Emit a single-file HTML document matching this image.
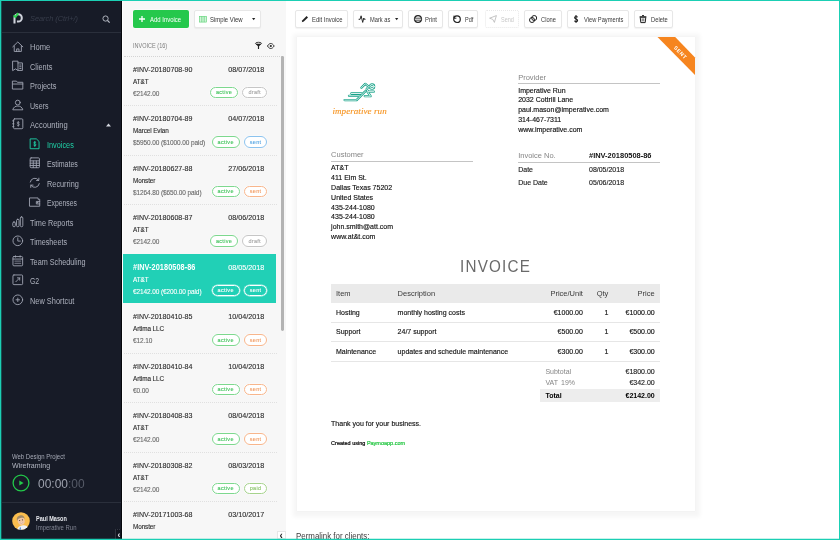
<!DOCTYPE html>
<html lang="en">
<head>
<meta charset="utf-8">
<title>Invoices</title>
<style>
*{box-sizing:border-box;margin:0;padding:0}
html,body{width:840px;height:540px;overflow:hidden;background:#fff}
body{font-family:"Liberation Sans",sans-serif;font-size:7px;color:#222;position:relative}
.t{position:absolute;white-space:nowrap}
.r{position:absolute}
svg{position:absolute;overflow:visible}
#app{position:absolute;left:0;top:0;width:840px;height:540px;will-change:transform}
#side{position:absolute;left:0;top:0;width:122px;height:540px;background:#171b27}
#list{position:absolute;left:122px;top:0;width:163.5px;height:540px;background:#f7f7f7;border-left:1.5px solid #fdfdfd}
#main{position:absolute;left:285.5px;top:0;width:554.5px;height:540px;background:#fff}
#paper{position:absolute;left:296.7px;top:37.3px;width:398px;height:474px;background:#fff;box-shadow:0 1.5px 4px 4.5px rgba(0,0,0,.04),0 0 1px rgba(0,0,0,.05)}
.btn{position:absolute;top:10px;height:17.6px;border:1px solid #e7e7e7;border-radius:2px;background:#fff;box-shadow:0 1px 1px rgba(0,0,0,.05)}
.bd{position:absolute;height:11.6px;border:1.2px solid;border-radius:6px;background:#fff;box-shadow:0 0 0 .5px rgba(255,255,255,.7)}
.bd span{position:absolute;left:0;right:0;top:.6px;text-align:center;font-size:5.5px;line-height:9.6px;letter-spacing:.3px;-webkit-text-stroke:.1px}
.sep{position:absolute;height:0;border-top:1px dotted #e0e0e0}
</style>
</head>
<body>
<div id="app">
<aside aria-label="Sidebar">
<div id="side"></div>
<svg style="left:12.7px;top:12.3px" width="10.3" height="12.2" viewBox="0 0 11 13"><path d="M1.6 12.2V6.3a3.9 3.9 0 1 1 3.9 3.9H4.2" fill="none" stroke="#cfd3dc" stroke-width="2.2"/><path d="M0.6 3.6L2.6 5.4L5.6 1.2" fill="none" stroke="#2bd04d" stroke-width="2"/></svg>
<div class="t" style="left:30px;top:14px;font-size:7.6px;line-height:10px;color:#383d4b;font-style:italic;transform:scaleX(0.967);transform-origin:0 50%">Search (Ctrl+/)</div>
<svg style="left:102.3px;top:14.8px" width="8.4" height="8.4" viewBox="0 0 9 9"><circle cx="3.8" cy="3.8" r="2.8" fill="none" stroke="#b8bcc6" stroke-width="1"/><path d="M5.9 5.9L8.2 8.2" stroke="#b8bcc6" stroke-width="1.2"/></svg>
<div class="r" style="left:1.5px;top:32px;width:120.5px;height:1px;background:#2a2f3b"></div>
<svg style="left:12.2px;top:40.5px" width="11.6" height="11.6" viewBox="0 0 12 12" fill="none" stroke="#9ea2b0" stroke-width=".95" stroke-linejoin="round" stroke-linecap="round"><path d="M0.8 6L6 1L11.2 6"/><path d="M2.3 5.2V10.8H9.7V5.2"/><path d="M4.8 10.8V8.2H7.2V10.8"/></svg>
<div class="t" style="left:29.6px;top:42.3px;font-size:8.3px;line-height:10px;color:#adb1bd;transform:scaleX(0.912);transform-origin:0 50%">Home</div>
<svg style="left:12.2px;top:59.9px" width="11.6" height="11.6" viewBox="0 0 12 12" fill="none" stroke="#9ea2b0" stroke-width=".95" stroke-linejoin="round" stroke-linecap="round"><path d="M1 1.2H6.2V10.8L3.6 9.2L1 10.8Z"/><path d="M6.2 3H10.8V10.8H6.2"/><path d="M8 5.2H9.3M8 7H9.3M8 8.8H9.3"/></svg>
<div class="t" style="left:29.6px;top:61.7px;font-size:8.3px;line-height:10px;color:#adb1bd;transform:scaleX(0.883);transform-origin:0 50%">Clients</div>
<svg style="left:12.2px;top:79.4px" width="11.6" height="11.6" viewBox="0 0 12 12" fill="none" stroke="#9ea2b0" stroke-width=".95" stroke-linejoin="round" stroke-linecap="round"><path d="M0.8 2.2H4.6L5.6 3.4H11.2V10.4H0.8Z"/><path d="M0.8 5.2H11.2"/></svg>
<div class="t" style="left:29.6px;top:81.2px;font-size:8.3px;line-height:10px;color:#adb1bd;transform:scaleX(0.884);transform-origin:0 50%">Projects</div>
<svg style="left:12.2px;top:98.8px" width="11.6" height="11.6" viewBox="0 0 12 12" fill="none" stroke="#9ea2b0" stroke-width=".95" stroke-linejoin="round" stroke-linecap="round"><circle cx="6" cy="3.7" r="2.5"/><path d="M0.9 10.8C1.6 8.3 3.6 7.3 6 7.3S10.4 8.3 11.1 10.8Z"/></svg>
<div class="t" style="left:29.6px;top:100.6px;font-size:8.3px;line-height:10px;color:#adb1bd;transform:scaleX(0.854);transform-origin:0 50%">Users</div>
<svg style="left:12.2px;top:118.2px" width="11.6" height="11.6" viewBox="0 0 12 12" fill="none" stroke="#9ea2b0" stroke-width=".95" stroke-linejoin="round" stroke-linecap="round"><rect x="1.6" y="0.9" width="9.6" height="10.2" rx="1"/><path d="M0.6 3H2M0.6 6H2M0.6 9H2"/><path d="M7.6 4.6C7.2 4 5.3 4 5.3 5.1S7.7 6 7.7 7S5.6 8.1 5.2 7.4M6.5 3.6V8.6" stroke-width=".8"/></svg>
<div class="t" style="left:29.6px;top:120px;font-size:8.3px;line-height:10px;color:#adb1bd;transform:scaleX(0.918);transform-origin:0 50%">Accounting</div>
<svg style="left:29.1px;top:137.8px" width="11.6" height="11.6" viewBox="0 0 12 12" fill="none" stroke="#1fd0a6" stroke-width=".95" stroke-linejoin="round" stroke-linecap="round"><path d="M1.6 0.9H7.6L10.4 3.6V11.1H1.6Z"/><path d="M7.1 4.6C6.7 4 4.9 4 4.9 5.1S7.2 6 7.2 7.1S5.2 8.2 4.8 7.5M6 3.6V8.8" stroke-width=".9"/></svg>
<div class="t" style="left:47.2px;top:139.6px;font-size:8.3px;line-height:10px;color:#1fd0a6;transform:scaleX(0.88);transform-origin:0 50%">Invoices</div>
<svg style="left:29.1px;top:157.3px" width="11.6" height="11.6" viewBox="0 0 12 12" fill="none" stroke="#9ea2b0" stroke-width=".95" stroke-linejoin="round" stroke-linecap="round"><rect x="1.2" y="0.9" width="9.6" height="10.2" rx="1"/><path d="M1.2 4H10.8M1.2 6.4H10.8M1.2 8.8H10.8M4.4 4V11M7.6 4V11"/></svg>
<div class="t" style="left:47.2px;top:159.1px;font-size:8.3px;line-height:10px;color:#adb1bd;transform:scaleX(0.848);transform-origin:0 50%">Estimates</div>
<svg style="left:29.1px;top:176.8px" width="11.6" height="11.6" viewBox="0 0 12 12" fill="none" stroke="#9ea2b0" stroke-width=".95" stroke-linejoin="round" stroke-linecap="round"><path d="M1.3 5.2A4.8 4.8 0 0 1 10 3.4"/><path d="M10.7 6.8A4.8 4.8 0 0 1 2 8.6"/><path d="M10.2 1.2V3.6H7.8M1.8 10.8V8.4H4.2"/></svg>
<div class="t" style="left:47.2px;top:178.6px;font-size:8.3px;line-height:10px;color:#adb1bd;transform:scaleX(0.884);transform-origin:0 50%">Recurring</div>
<svg style="left:29.1px;top:196.3px" width="11.6" height="11.6" viewBox="0 0 12 12" fill="none" stroke="#9ea2b0" stroke-width=".95" stroke-linejoin="round" stroke-linecap="round"><path d="M0.9 2H9.4V3.4H11.1V10.6H0.9Z"/><path d="M11.1 5.6H7.6V8.2H11.1"/><circle cx="8.7" cy="6.9" r=".4"/></svg>
<div class="t" style="left:47.2px;top:198.1px;font-size:8.3px;line-height:10px;color:#adb1bd;transform:scaleX(0.823);transform-origin:0 50%">Expenses</div>
<svg style="left:12.2px;top:215.7px" width="11.6" height="11.6" viewBox="0 0 12 12" fill="none" stroke="#9ea2b0" stroke-width=".95" stroke-linejoin="round" stroke-linecap="round"><rect x="0.8" y="6.2" width="2.6" height="4.9" rx="1.2"/><rect x="4.7" y="3.4" width="2.6" height="7.7" rx="1.2"/><rect x="8.6" y="0.9" width="2.6" height="10.2" rx="1.2"/></svg>
<div class="t" style="left:29.6px;top:217.5px;font-size:8.3px;line-height:10px;color:#adb1bd;transform:scaleX(0.879);transform-origin:0 50%">Time Reports</div>
<svg style="left:12.2px;top:235.2px" width="11.6" height="11.6" viewBox="0 0 12 12" fill="none" stroke="#9ea2b0" stroke-width=".95" stroke-linejoin="round" stroke-linecap="round"><circle cx="6" cy="6" r="5"/><path d="M6 3V6.3H8.6"/></svg>
<div class="t" style="left:29.6px;top:237px;font-size:8.3px;line-height:10px;color:#adb1bd;transform:scaleX(0.869);transform-origin:0 50%">Timesheets</div>
<svg style="left:12.2px;top:254.7px" width="11.6" height="11.6" viewBox="0 0 12 12" fill="none" stroke="#9ea2b0" stroke-width=".95" stroke-linejoin="round" stroke-linecap="round"><rect x="1" y="1.6" width="10" height="9.6" rx="1"/><path d="M1 4.2H11M3.6 0.8V2.2M8.4 0.8V2.2"/><path d="M3 6.3H9M3 8.6H9" stroke-width="1.2" stroke-opacity=".6"/></svg>
<div class="t" style="left:29.6px;top:256.5px;font-size:8.3px;line-height:10px;color:#adb1bd;transform:scaleX(0.873);transform-origin:0 50%">Team Scheduling</div>
<svg style="left:12.2px;top:274.2px" width="11.6" height="11.6" viewBox="0 0 12 12" fill="none" stroke="#9ea2b0" stroke-width=".95" stroke-linejoin="round" stroke-linecap="round"><rect x="1" y="1" width="10" height="10" rx="1"/><path d="M4 8L8 4M5.6 4H8V6.4"/></svg>
<div class="t" style="left:29.6px;top:276px;font-size:8.3px;line-height:10px;color:#adb1bd;transform:scaleX(0.831);transform-origin:0 50%">G2</div>
<svg style="left:12.2px;top:293.7px" width="11.6" height="11.6" viewBox="0 0 12 12" fill="none" stroke="#9ea2b0" stroke-width=".95" stroke-linejoin="round" stroke-linecap="round"><circle cx="6" cy="6" r="5"/><path d="M6 4.2V7.8M4.2 6H7.8"/></svg>
<div class="t" style="left:29.6px;top:295.5px;font-size:8.3px;line-height:10px;color:#adb1bd;transform:scaleX(0.891);transform-origin:0 50%">New Shortcut</div>
<svg style="left:105.5px;top:122.5px" width="5" height="4" viewBox="0 0 5 4"><path d="M0 3.6L2.5 0.4L5 3.6Z" fill="#d5d8e0"/></svg>
<div class="t" style="left:12px;top:452px;font-size:6.5px;line-height:10px;color:#a6aab6;transform:scaleX(0.921);transform-origin:0 50%">Web Design Project</div>
<div class="t" style="left:12px;top:460.8px;font-size:7.1px;line-height:10px;color:#b0b4c0;transform:scaleX(0.998);transform-origin:0 50%">Wireframing</div>
<svg style="left:11.5px;top:474.3px" width="18" height="18" viewBox="0 0 18 18"><circle cx="9" cy="9" r="7.9" fill="none" stroke="#22c94a" stroke-width="1.3"/><path d="M7.3 6.6L11.6 9L7.3 11.4Z" fill="#22c94a"/></svg>
<div class="t" style="left:38.2px;top:475.8px;font-size:13.2px;line-height:16px;color:#9ea2ae;transform:scaleX(0.907);transform-origin:0 50%">00:00<span style="color:#565b68">:00</span></div>
<div class="r" style="left:1.5px;top:502px;width:120.5px;height:1px;background:#2a2f3b"></div>
<svg style="left:11.7px;top:512.1px" width="18" height="18" viewBox="0 0 18 18"><defs><clipPath id="av"><circle cx="9" cy="9" r="8.8"/></clipPath></defs><g clip-path="url(#av)"><rect width="18" height="18" fill="#fabd4e"/><path d="M5.2 18C5.6 15 8 13.4 11 13.2C13.6 13 15.6 14.2 16.6 16L15 18Z" fill="#eef2f8"/><path d="M8.2 14.6L9.4 18H7.2Z" fill="#4f7fc0"/><g transform="rotate(-14 9 8.4)"><ellipse cx="9.1" cy="8.6" rx="3.5" ry="4.3" fill="#f0c6a4"/><path d="M5.3 8.2C4.7 4.8 6.7 3.3 9.2 3.3S13.5 4.9 12.9 8.2C12.4 6.6 11.4 6 9.1 6S5.8 6.6 5.3 8.2Z" fill="#a08a68"/><circle cx="7.7" cy="8.2" r=".55" fill="#4a3a2c"/><circle cx="10.5" cy="8.2" r=".55" fill="#4a3a2c"/><path d="M7.8 10.6Q9.1 11.6 10.4 10.6" fill="#fff" stroke="#b5705c" stroke-width=".3"/></g></g></svg>
<div class="t" style="left:35.5px;top:513.7px;font-size:6.6px;line-height:10px;color:#e6e8ed;font-weight:bold;transform:scaleX(0.84);transform-origin:0 50%">Paul Mason</div>
<div class="t" style="left:35.5px;top:522.6px;font-size:6.6px;line-height:10px;color:#818593;transform:scaleX(0.905);transform-origin:0 50%">Imperative Run</div>
<div class="r" style="left:114.6px;top:529.4px;width:7.4px;height:9.6px;background:#121520;border-left:1px solid #30343f;border-top:1px dotted #343844"></div>
<div class="t" style="left:117.4px;top:530.4px;font-size:8.6px;line-height:10px;color:#e8eaee;font-weight:bold">&lsaquo;</div>
<div class="r" style="left:121px;top:0;width:1px;height:540px;background:#05070b"></div>
</aside>
<section aria-label="Invoice list">
<div id="list"></div>
<div class="r" style="left:132.6px;top:10px;width:56.3px;height:17.5px;background:#25c84c;border-radius:2px;box-shadow:0 0 0 .6px rgba(255,255,255,.8)"></div>
<svg style="left:138.6px;top:15.8px" width="6" height="6" viewBox="0 0 6 6"><path d="M3 0V6M0 3H6" stroke="#fff" stroke-width="1.3"/></svg>
<div class="t" style="left:150.4px;top:14.9px;font-size:7.4px;line-height:10px;color:#fff;transform:scaleX(0.807);transform-origin:0 50%">Add Invoice</div>
<div class="btn" style="left:194.2px;width:66.5px"></div>
<svg style="left:199px;top:15.7px" width="8" height="6.4" viewBox="0 0 8 6.4"><rect x="0.3" y="0.3" width="7.4" height="5.8" fill="#d2f3d8" stroke="#5ad474" stroke-width=".6"/><path d="M2.8 0.3V6.1M5.2 0.3V6.1" stroke="#5ad474" stroke-width=".7"/></svg>
<div class="t" style="left:210.2px;top:14.9px;font-size:7.4px;line-height:10px;color:#333;transform:scaleX(0.803);transform-origin:0 50%">Simple View</div>
<svg style="left:251.6px;top:18px" width="3.3" height="2.4" viewBox="0 0 4 3"><path d="M0 0H4L2 2.8Z" fill="#222"/></svg>
<div class="t" style="left:132.7px;top:41.1px;font-size:6.6px;line-height:10px;color:#7e7e7e;transform:scaleX(0.84);transform-origin:0 50%">INVOICE (16)</div>
<svg style="left:254.8px;top:42.2px" width="7" height="7.2" viewBox="0 0 7.4 7.6"><ellipse cx="3.7" cy="1.5" rx="3.2" ry="1.2" fill="none" stroke="#222" stroke-width=".9"/><path d="M0.6 1.8L3.1 4.6V7.4H4.3V4.6L6.8 1.8Z" fill="#222"/></svg>
<svg style="left:267.4px;top:43px" width="7.6" height="6" viewBox="0 0 7.6 6"><path d="M0.4 3C1.6 1.2 2.7 0.5 3.8 0.5S6 1.2 7.2 3C6 4.8 4.9 5.5 3.8 5.5S1.6 4.8 0.4 3Z" fill="none" stroke="#222" stroke-width=".9"/><circle cx="3.8" cy="3" r="1.1" fill="#222"/></svg>
<div class="sep" style="left:123.5px;top:55.6px;width:158px;border-top-color:#d4d4d4"></div>
<div class="r" style="left:281.2px;top:56px;width:2.8px;height:275px;background:#b4b4b4;border-radius:1.4px"></div>
<div class="t" style="left:132.5px;top:64.5px;font-size:7.95px;line-height:10px;color:#2b2b2b;letter-spacing:0px;-webkit-text-stroke:0.12px;transform:scaleX(0.893);transform-origin:0 50%">#INV-20180708-90</div>
<div class="t" style="right:575.4px;top:64.5px;font-size:8.06px;line-height:10px;color:#2b2b2b;-webkit-text-stroke:0.12px;transform:scaleX(0.893);transform-origin:100% 50%">08/07/2018</div>
<div class="t" style="left:132.5px;top:76.6px;font-size:6.78px;line-height:10px;color:#2b2b2b;letter-spacing:-0.106px;-webkit-text-stroke:0.12px;transform:scaleX(0.943);transform-origin:0 50%">AT&amp;T</div>
<div class="t" style="left:132.5px;top:88.6px;font-size:7.15px;line-height:10px;color:#666;letter-spacing:-0.11px;-webkit-text-stroke:0.1px;transform:scaleX(0.909);transform-origin:0 50%">&euro;2142.00</div>
<div class="bd" style="left:210.1px;top:86.7px;width:27.8px;border-color:#7dd88e;color:#3fc35a;background:#fff"><span>active</span></div>
<div class="bd" style="left:242.2px;top:86.7px;width:25px;border-color:#c6c6c6;color:#a4a4a4;background:#fff"><span>draft</span></div>
<div class="sep" style="left:124px;top:105px;width:153px"></div>
<div class="t" style="left:132.5px;top:114px;font-size:7.95px;line-height:10px;color:#2b2b2b;letter-spacing:0px;-webkit-text-stroke:0.12px;transform:scaleX(0.893);transform-origin:0 50%">#INV-20180704-89</div>
<div class="t" style="right:575.4px;top:114px;font-size:8.06px;line-height:10px;color:#2b2b2b;-webkit-text-stroke:0.12px;transform:scaleX(0.893);transform-origin:100% 50%">04/07/2018</div>
<div class="t" style="left:132.5px;top:126.1px;font-size:6.78px;line-height:10px;color:#2b2b2b;letter-spacing:-0.106px;-webkit-text-stroke:0.12px;transform:scaleX(0.943);transform-origin:0 50%">Marcel Evian</div>
<div class="t" style="left:132.5px;top:138.1px;font-size:7.15px;line-height:10px;color:#666;letter-spacing:-0.11px;-webkit-text-stroke:0.1px;transform:scaleX(0.909);transform-origin:0 50%">$5950.00 ($1000.00 paid)</div>
<div class="bd" style="left:211.8px;top:136.2px;width:27.8px;border-color:#7dd88e;color:#3fc35a;background:#fff"><span>active</span></div>
<div class="bd" style="left:243.9px;top:136.2px;width:23.3px;border-color:#8cc3ee;color:#55a5e3;background:#fff"><span>sent</span></div>
<div class="sep" style="left:124px;top:154.5px;width:153px"></div>
<div class="t" style="left:132.5px;top:163.5px;font-size:7.95px;line-height:10px;color:#2b2b2b;letter-spacing:0px;-webkit-text-stroke:0.12px;transform:scaleX(0.893);transform-origin:0 50%">#INV-20180627-88</div>
<div class="t" style="right:575.4px;top:163.5px;font-size:8.06px;line-height:10px;color:#2b2b2b;-webkit-text-stroke:0.12px;transform:scaleX(0.893);transform-origin:100% 50%">27/06/2018</div>
<div class="t" style="left:132.5px;top:175.6px;font-size:6.78px;line-height:10px;color:#2b2b2b;letter-spacing:-0.106px;-webkit-text-stroke:0.12px;transform:scaleX(0.943);transform-origin:0 50%">Monster</div>
<div class="t" style="left:132.5px;top:187.6px;font-size:7.15px;line-height:10px;color:#666;letter-spacing:-0.11px;-webkit-text-stroke:0.1px;transform:scaleX(0.909);transform-origin:0 50%">$1264.80 ($650.00 paid)</div>
<div class="bd" style="left:211.8px;top:185.7px;width:27.8px;border-color:#7dd88e;color:#3fc35a;background:#fff"><span>active</span></div>
<div class="bd" style="left:243.9px;top:185.7px;width:23.3px;border-color:#f8b68c;color:#f19a60;background:#fff"><span>sent</span></div>
<div class="sep" style="left:124px;top:204px;width:153px"></div>
<div class="t" style="left:132.5px;top:213px;font-size:7.95px;line-height:10px;color:#2b2b2b;letter-spacing:0px;-webkit-text-stroke:0.12px;transform:scaleX(0.893);transform-origin:0 50%">#INV-20180608-87</div>
<div class="t" style="right:575.4px;top:213px;font-size:8.06px;line-height:10px;color:#2b2b2b;-webkit-text-stroke:0.12px;transform:scaleX(0.893);transform-origin:100% 50%">08/06/2018</div>
<div class="t" style="left:132.5px;top:225.1px;font-size:6.78px;line-height:10px;color:#2b2b2b;letter-spacing:-0.106px;-webkit-text-stroke:0.12px;transform:scaleX(0.943);transform-origin:0 50%">AT&amp;T</div>
<div class="t" style="left:132.5px;top:237.1px;font-size:7.15px;line-height:10px;color:#666;letter-spacing:-0.11px;-webkit-text-stroke:0.1px;transform:scaleX(0.909);transform-origin:0 50%">&euro;2142.00</div>
<div class="bd" style="left:210.1px;top:235.2px;width:27.8px;border-color:#7dd88e;color:#3fc35a;background:#fff"><span>active</span></div>
<div class="bd" style="left:242.2px;top:235.2px;width:25px;border-color:#c6c6c6;color:#a4a4a4;background:#fff"><span>draft</span></div>
<div class="r" style="left:123px;top:254px;width:153.2px;height:48.6px;background:#21d0b6"></div>
<div class="t" style="left:132.5px;top:262.5px;font-size:8.23px;line-height:10px;color:#fff;font-weight:bold;letter-spacing:0.056px;transform:scaleX(0.893);transform-origin:0 50%">#INV-20180508-86</div>
<div class="t" style="right:575.4px;top:262.5px;font-size:8.06px;line-height:10px;color:#fff;-webkit-text-stroke:0.12px;transform:scaleX(0.893);transform-origin:100% 50%">08/05/2018</div>
<div class="t" style="left:132.5px;top:274.6px;font-size:6.78px;line-height:10px;color:#fff;letter-spacing:-0.106px;-webkit-text-stroke:0.12px;transform:scaleX(0.943);transform-origin:0 50%">AT&amp;T</div>
<div class="t" style="left:132.5px;top:286.6px;font-size:7.15px;line-height:10px;color:#fff;letter-spacing:-0.11px;-webkit-text-stroke:0.1px;transform:scaleX(0.909);transform-origin:0 50%">&euro;2142.00 (&euro;200.00 paid)</div>
<div class="bd" style="left:211.8px;top:284.7px;width:27.8px;border-color:#fff;color:#fff;background:transparent"><span>active</span></div>
<div class="bd" style="left:243.9px;top:284.7px;width:23.3px;border-color:#fff;color:#fff;background:transparent"><span>sent</span></div>
<div class="t" style="left:132.5px;top:312px;font-size:7.95px;line-height:10px;color:#2b2b2b;letter-spacing:0px;-webkit-text-stroke:0.12px;transform:scaleX(0.893);transform-origin:0 50%">#INV-20180410-85</div>
<div class="t" style="right:575.4px;top:312px;font-size:8.06px;line-height:10px;color:#2b2b2b;-webkit-text-stroke:0.12px;transform:scaleX(0.893);transform-origin:100% 50%">10/04/2018</div>
<div class="t" style="left:132.5px;top:324.1px;font-size:6.78px;line-height:10px;color:#2b2b2b;letter-spacing:-0.106px;-webkit-text-stroke:0.12px;transform:scaleX(0.943);transform-origin:0 50%">Artima LLC</div>
<div class="t" style="left:132.5px;top:336.1px;font-size:7.15px;line-height:10px;color:#666;letter-spacing:-0.11px;-webkit-text-stroke:0.1px;transform:scaleX(0.909);transform-origin:0 50%">&euro;12.10</div>
<div class="bd" style="left:211.8px;top:334.2px;width:27.8px;border-color:#7dd88e;color:#3fc35a;background:#fff"><span>active</span></div>
<div class="bd" style="left:243.9px;top:334.2px;width:23.3px;border-color:#f8b68c;color:#f19a60;background:#fff"><span>sent</span></div>
<div class="sep" style="left:124px;top:352.5px;width:153px"></div>
<div class="t" style="left:132.5px;top:361.5px;font-size:7.95px;line-height:10px;color:#2b2b2b;letter-spacing:0px;-webkit-text-stroke:0.12px;transform:scaleX(0.893);transform-origin:0 50%">#INV-20180410-84</div>
<div class="t" style="right:575.4px;top:361.5px;font-size:8.06px;line-height:10px;color:#2b2b2b;-webkit-text-stroke:0.12px;transform:scaleX(0.893);transform-origin:100% 50%">10/04/2018</div>
<div class="t" style="left:132.5px;top:373.6px;font-size:6.78px;line-height:10px;color:#2b2b2b;letter-spacing:-0.106px;-webkit-text-stroke:0.12px;transform:scaleX(0.943);transform-origin:0 50%">Artima LLC</div>
<div class="t" style="left:132.5px;top:385.6px;font-size:7.15px;line-height:10px;color:#666;letter-spacing:-0.11px;-webkit-text-stroke:0.1px;transform:scaleX(0.909);transform-origin:0 50%">&euro;0.00</div>
<div class="bd" style="left:211.8px;top:383.7px;width:27.8px;border-color:#7dd88e;color:#3fc35a;background:#fff"><span>active</span></div>
<div class="bd" style="left:243.9px;top:383.7px;width:23.3px;border-color:#f8b68c;color:#f19a60;background:#fff"><span>sent</span></div>
<div class="sep" style="left:124px;top:402px;width:153px"></div>
<div class="t" style="left:132.5px;top:411px;font-size:7.95px;line-height:10px;color:#2b2b2b;letter-spacing:0px;-webkit-text-stroke:0.12px;transform:scaleX(0.893);transform-origin:0 50%">#INV-20180408-83</div>
<div class="t" style="right:575.4px;top:411px;font-size:8.06px;line-height:10px;color:#2b2b2b;-webkit-text-stroke:0.12px;transform:scaleX(0.893);transform-origin:100% 50%">08/04/2018</div>
<div class="t" style="left:132.5px;top:423.1px;font-size:6.78px;line-height:10px;color:#2b2b2b;letter-spacing:-0.106px;-webkit-text-stroke:0.12px;transform:scaleX(0.943);transform-origin:0 50%">AT&amp;T</div>
<div class="t" style="left:132.5px;top:435.1px;font-size:7.15px;line-height:10px;color:#666;letter-spacing:-0.11px;-webkit-text-stroke:0.1px;transform:scaleX(0.909);transform-origin:0 50%">&euro;2142.00</div>
<div class="bd" style="left:211.8px;top:433.2px;width:27.8px;border-color:#7dd88e;color:#3fc35a;background:#fff"><span>active</span></div>
<div class="bd" style="left:243.9px;top:433.2px;width:23.3px;border-color:#f8b68c;color:#f19a60;background:#fff"><span>sent</span></div>
<div class="sep" style="left:124px;top:451.5px;width:153px"></div>
<div class="t" style="left:132.5px;top:460.5px;font-size:7.95px;line-height:10px;color:#2b2b2b;letter-spacing:0px;-webkit-text-stroke:0.12px;transform:scaleX(0.893);transform-origin:0 50%">#INV-20180308-82</div>
<div class="t" style="right:575.4px;top:460.5px;font-size:8.06px;line-height:10px;color:#2b2b2b;-webkit-text-stroke:0.12px;transform:scaleX(0.893);transform-origin:100% 50%">08/03/2018</div>
<div class="t" style="left:132.5px;top:472.6px;font-size:6.78px;line-height:10px;color:#2b2b2b;letter-spacing:-0.106px;-webkit-text-stroke:0.12px;transform:scaleX(0.943);transform-origin:0 50%">AT&amp;T</div>
<div class="t" style="left:132.5px;top:484.6px;font-size:7.15px;line-height:10px;color:#666;letter-spacing:-0.11px;-webkit-text-stroke:0.1px;transform:scaleX(0.909);transform-origin:0 50%">&euro;2142.00</div>
<div class="bd" style="left:211.8px;top:482.7px;width:27.8px;border-color:#7dd88e;color:#3fc35a;background:#fff"><span>active</span></div>
<div class="bd" style="left:243.9px;top:482.7px;width:23.3px;border-color:#a6d38c;color:#8cc56c;background:#fff"><span>paid</span></div>
<div class="sep" style="left:124px;top:501px;width:153px"></div>
<div class="t" style="left:132.5px;top:510px;font-size:7.95px;line-height:10px;color:#2b2b2b;letter-spacing:0px;-webkit-text-stroke:0.12px;transform:scaleX(0.893);transform-origin:0 50%">#INV-20171003-68</div>
<div class="t" style="right:575.4px;top:510px;font-size:8.06px;line-height:10px;color:#2b2b2b;-webkit-text-stroke:0.12px;transform:scaleX(0.893);transform-origin:100% 50%">03/10/2017</div>
<div class="t" style="left:132.5px;top:522.1px;font-size:6.78px;line-height:10px;color:#2b2b2b;letter-spacing:-0.106px;-webkit-text-stroke:0.12px;transform:scaleX(0.943);transform-origin:0 50%">Monster</div>
<div class="r" style="left:277px;top:530.5px;width:8.5px;height:8px;background:#fff;border:1px solid #e6e6e6"></div>
<div class="t" style="left:279.4px;top:529.7px;font-size:10px;line-height:12px;color:#222;font-weight:bold">&lsaquo;</div>
</section>
<main>
<div id="main"></div>
<div class="btn" style="left:295.4px;width:52.6px;"></div>
<svg style="left:300.6px;top:14.7px" width="8" height="8" viewBox="0 0 8 8"><path d="M0.8 7.2L1.4 5.2L5.6 1L7 2.4L2.8 6.6Z" fill="#222"/></svg>
<div class="t" style="left:312px;top:14.9px;font-size:7.3px;line-height:10px;color:#3a3a3a;transform:scaleX(0.808);transform-origin:0 50%">Edit Invoice</div>
<div class="btn" style="left:353px;width:50.3px;"></div>
<svg style="left:358px;top:14.7px" width="8" height="8" viewBox="0 0 8 8"><path d="M0.6 4.3H2.1L3.1 0.8L4.7 7.4L5.8 3L6.3 4.3H7.5" fill="none" stroke="#222" stroke-width=".95"/></svg>
<div class="t" style="left:369.7px;top:14.9px;font-size:7.3px;line-height:10px;color:#3a3a3a;transform:scaleX(0.782);transform-origin:0 50%">Mark as</div>
<svg style="left:394.6px;top:18px" width="3.3" height="2.4" viewBox="0 0 4 3"><path d="M0 0H4L2 2.8Z" fill="#222"/></svg>
<div class="btn" style="left:408.4px;width:34.4px;"></div>
<svg style="left:413.5px;top:14.7px" width="8" height="8" viewBox="0 0 8 8"><circle cx="4" cy="4" r="3.4" fill="none" stroke="#222" stroke-width="1.2"/><path d="M0.4 3.2H7.6V5.2H0.4Z" fill="#fff" stroke="#222" stroke-width=".8"/></svg>
<div class="t" style="left:425px;top:14.9px;font-size:7.3px;line-height:10px;color:#3a3a3a;transform:scaleX(0.799);transform-origin:0 50%">Print</div>
<div class="btn" style="left:448px;width:30.4px;"></div>
<svg style="left:453px;top:14.7px" width="8" height="8" viewBox="0 0 8 8"><circle cx="4" cy="4.2" r="3.3" fill="none" stroke="#222" stroke-width="1.2"/><path d="M1 0.6V3.2H3.4" fill="none" stroke="#222" stroke-width="1"/></svg>
<div class="t" style="left:464.7px;top:14.9px;font-size:7.3px;line-height:10px;color:#3a3a3a;transform:scaleX(0.757);transform-origin:0 50%">Pdf</div>
<div class="btn" style="left:484.6px;width:34.6px;border-style:dotted;border-color:#e8e8e8;box-shadow:none;"></div>
<svg style="left:489px;top:14.7px" width="8" height="8" viewBox="0 0 8 8"><path d="M0.6 3.2L7.4 0.6L5.4 7.4L3.8 4.4Z" fill="none" stroke="#b5b5b5" stroke-width=".8"/></svg>
<div class="t" style="left:500.8px;top:14.9px;font-size:7.3px;line-height:10px;color:#c8c8c8;transform:scaleX(0.757);transform-origin:0 50%">Send</div>
<div class="btn" style="left:524.1px;width:37.5px;"></div>
<svg style="left:529px;top:14.7px" width="8" height="8" viewBox="0 0 8 8"><circle cx="3" cy="5" r="2.5" fill="none" stroke="#222" stroke-width="1"/><circle cx="5.2" cy="3" r="2.5" fill="none" stroke="#222" stroke-width="1"/></svg>
<div class="t" style="left:541px;top:14.9px;font-size:7.3px;line-height:10px;color:#3a3a3a;transform:scaleX(0.786);transform-origin:0 50%">Clone</div>
<div class="btn" style="left:567px;width:61.8px;"></div>
<svg style="left:571.7px;top:14.7px" width="8" height="8" viewBox="0 0 8 8"><path d="M5.6 2.2C5 1.2 2.6 1.2 2.6 2.7S5.6 3.8 5.6 5.4S3 6.9 2.3 5.8M4 0V8" fill="none" stroke="#222" stroke-width="1.1"/></svg>
<div class="t" style="left:583.7px;top:14.9px;font-size:7.3px;line-height:10px;color:#3a3a3a;transform:scaleX(0.783);transform-origin:0 50%">View Payments</div>
<div class="btn" style="left:634.2px;width:38.8px;"></div>
<svg style="left:639px;top:14.7px" width="8" height="8" viewBox="0 0 8 8"><path d="M1.2 2.2H6.8L6.2 7.6H1.8Z" fill="none" stroke="#222" stroke-width="1"/><path d="M0.6 1.8H7.4M3 0.6H5" stroke="#222" stroke-width="1"/><path d="M3.2 3.4V6.4M4.8 3.4V6.4" stroke="#222" stroke-width=".7"/></svg>
<div class="t" style="left:650.8px;top:14.9px;font-size:7.3px;line-height:10px;color:#3a3a3a;transform:scaleX(0.796);transform-origin:0 50%">Delete</div>
<div id="paper"></div>
<svg style="left:657px;top:37px" width="38" height="38" viewBox="0 0 38 38"><path d="M0.5 0H18.2L38 20.5V38Z" fill="#f6851f"/><text x="0" y="0" transform="translate(23.6 15.4) rotate(45)" text-anchor="middle" dominant-baseline="central" font-family="Liberation Sans, sans-serif" font-weight="bold" font-size="5.2" letter-spacing=".6" fill="#fff">SENT</text></svg>
<svg style="left:344px;top:82.5px" width="33" height="19" viewBox="0 0 33 19" fill="none" stroke-linecap="round" stroke-linejoin="round"><g stroke="#16a288" stroke-width="2.3"><path d="M7.4 10.5H17.2M5 12.8H15.4M0.6 17.1H12.6L21.2 8.4M17.4 4.8L21.3 0.9L24.6 3.6L22.6 6.2L24.2 8.6L29.8 8.7M23.4 8.6L26.6 13.2H20.8"/><circle cx="28" cy="3.6" r="2.1"/></g><g stroke="#fff" stroke-width=".85"><path d="M7.4 10.5H17.2M5 12.8H15.4M0.6 17.1H12.6L21.2 8.4M17.4 4.8L21.3 0.9L24.6 3.6L22.6 6.2L24.2 8.6L29.8 8.7M23.4 8.6L26.6 13.2H20.8"/><circle cx="28" cy="3.6" r="2.1"/></g></svg>
<div class="t" style="left:332.4px;top:104.6px;font-size:9px;line-height:12px;color:#f7931e;letter-spacing:0.08px;font-family:'Liberation Serif',serif;font-style:italic;-webkit-text-stroke:0.12px">imperative run</div>
<div class="t" style="left:518.2px;top:73.1px;font-size:7.5px;line-height:10px;color:#858585">Provider</div>
<div class="r" style="left:518.2px;top:82.6px;width:141.4px;height:1px;background:#c4c4c4"></div>
<div class="t" style="left:518.2px;top:85.6px;font-size:7px;line-height:10px;color:#111;-webkit-text-stroke:0.14px">Imperative Run</div>
<div class="t" style="left:518.2px;top:95.37px;font-size:7px;line-height:10px;color:#111;-webkit-text-stroke:0.14px">2032 Cottrill Lane</div>
<div class="t" style="left:518.2px;top:105.14px;font-size:7px;line-height:10px;color:#111;-webkit-text-stroke:0.14px">paul.mason@imperative.com</div>
<div class="t" style="left:518.2px;top:114.91px;font-size:7px;line-height:10px;color:#111;-webkit-text-stroke:0.14px">314-467-7311</div>
<div class="t" style="left:518.2px;top:124.68px;font-size:7px;line-height:10px;color:#111;-webkit-text-stroke:0.14px">www.imperative.com</div>
<div class="t" style="left:331.1px;top:149.6px;font-size:7.5px;line-height:10px;color:#858585">Customer</div>
<div class="r" style="left:331.1px;top:160.7px;width:141.5px;height:1px;background:#c4c4c4"></div>
<div class="t" style="left:331.1px;top:163.4px;font-size:7px;line-height:10px;color:#111;-webkit-text-stroke:0.14px">AT&amp;T</div>
<div class="t" style="left:331.1px;top:173.19px;font-size:7px;line-height:10px;color:#111;-webkit-text-stroke:0.14px">411 Elm St.</div>
<div class="t" style="left:331.1px;top:182.98px;font-size:7px;line-height:10px;color:#111;-webkit-text-stroke:0.14px">Dallas Texas 75202</div>
<div class="t" style="left:331.1px;top:192.77px;font-size:7px;line-height:10px;color:#111;-webkit-text-stroke:0.14px">United States</div>
<div class="t" style="left:331.1px;top:202.56px;font-size:7px;line-height:10px;color:#111;-webkit-text-stroke:0.14px">435-244-1080</div>
<div class="t" style="left:331.1px;top:212.35px;font-size:7px;line-height:10px;color:#111;-webkit-text-stroke:0.14px">435-244-1080</div>
<div class="t" style="left:331.1px;top:222.14px;font-size:7px;line-height:10px;color:#111;-webkit-text-stroke:0.14px">john.smith@att.com</div>
<div class="t" style="left:331.1px;top:231.93px;font-size:7px;line-height:10px;color:#111;-webkit-text-stroke:0.14px">www.at&amp;t.com</div>
<div class="t" style="left:518.2px;top:151.4px;font-size:7.5px;line-height:10px;color:#858585">Invoice No.</div>
<div class="t" style="left:589px;top:151.4px;font-size:7.45px;line-height:10px;color:#111;font-weight:bold">#INV-20180508-86</div>
<div class="r" style="left:518.2px;top:161.8px;width:141.4px;height:1px;background:#c4c4c4"></div>
<div class="t" style="left:518.2px;top:165px;font-size:7px;line-height:10px;color:#222;-webkit-text-stroke:0.14px">Date</div>
<div class="t" style="left:589px;top:165px;font-size:7px;line-height:10px;color:#222;-webkit-text-stroke:0.14px">08/05/2018</div>
<div class="t" style="left:518.2px;top:177.6px;font-size:7px;line-height:10px;color:#222;-webkit-text-stroke:0.14px">Due Date</div>
<div class="t" style="left:589px;top:177.6px;font-size:7px;line-height:10px;color:#222;-webkit-text-stroke:0.14px">05/06/2018</div>
<div class="t" style="left:459.8px;top:255.6px;font-size:16.4px;line-height:20px;color:#6a6a6a;letter-spacing:1.3px;transform:scaleX(.93);transform-origin:0 50%">INVOICE</div>
<div class="r" style="left:331.1px;top:283.9px;width:328.5px;height:18.8px;background:#eaeaea"></div>
<div class="t" style="left:336px;top:288.5px;font-size:7.5px;line-height:10px;color:#3a3a3a">Item</div>
<div class="t" style="left:397.6px;top:288.5px;font-size:7.5px;line-height:10px;color:#3a3a3a">Description</div>
<div class="t" style="right:257.1px;top:288.5px;font-size:7.5px;line-height:10px;color:#3a3a3a">Price/Unit</div>
<div class="t" style="right:231.7px;top:288.5px;font-size:7.5px;line-height:10px;color:#3a3a3a">Qty</div>
<div class="t" style="right:185.3px;top:288.5px;font-size:7.5px;line-height:10px;color:#3a3a3a">Price</div>
<div class="t" style="left:336px;top:307.6px;font-size:7px;line-height:10px;color:#111;-webkit-text-stroke:0.14px">Hosting</div>
<div class="t" style="left:397.6px;top:307.6px;font-size:7px;line-height:10px;color:#111;-webkit-text-stroke:0.14px">monthly hosting costs</div>
<div class="t" style="right:257.1px;top:307.6px;font-size:7px;line-height:10px;color:#111;-webkit-text-stroke:0.14px">&euro;1000.00</div>
<div class="t" style="right:231.7px;top:307.6px;font-size:7px;line-height:10px;color:#111;-webkit-text-stroke:0.14px">1</div>
<div class="t" style="right:185.3px;top:307.6px;font-size:7px;line-height:10px;color:#111;-webkit-text-stroke:0.14px">&euro;1000.00</div>
<div class="r" style="left:331.1px;top:321.5px;width:328.5px;height:1px;background:#e6e6e6"></div>
<div class="t" style="left:336px;top:326.6px;font-size:7px;line-height:10px;color:#111;-webkit-text-stroke:0.14px">Support</div>
<div class="t" style="left:397.6px;top:326.6px;font-size:7px;line-height:10px;color:#111;-webkit-text-stroke:0.14px">24/7 support</div>
<div class="t" style="right:257.1px;top:326.6px;font-size:7px;line-height:10px;color:#111;-webkit-text-stroke:0.14px">&euro;500.00</div>
<div class="t" style="right:231.7px;top:326.6px;font-size:7px;line-height:10px;color:#111;-webkit-text-stroke:0.14px">1</div>
<div class="t" style="right:185.3px;top:326.6px;font-size:7px;line-height:10px;color:#111;-webkit-text-stroke:0.14px">&euro;500.00</div>
<div class="r" style="left:331.1px;top:340.8px;width:328.5px;height:1px;background:#e6e6e6"></div>
<div class="t" style="left:336px;top:346.6px;font-size:7px;line-height:10px;color:#111;-webkit-text-stroke:0.14px">Maintenance</div>
<div class="t" style="left:397.6px;top:346.6px;font-size:7px;line-height:10px;color:#111;-webkit-text-stroke:0.14px">updates and schedule maintenance</div>
<div class="t" style="right:257.1px;top:346.6px;font-size:7px;line-height:10px;color:#111;-webkit-text-stroke:0.14px">&euro;300.00</div>
<div class="t" style="right:231.7px;top:346.6px;font-size:7px;line-height:10px;color:#111;-webkit-text-stroke:0.14px">1</div>
<div class="t" style="right:185.3px;top:346.6px;font-size:7px;line-height:10px;color:#111;-webkit-text-stroke:0.14px">&euro;300.00</div>
<div class="r" style="left:331.1px;top:360.8px;width:328.5px;height:1px;background:#e6e6e6"></div>
<div class="t" style="left:545.4px;top:367px;font-size:7px;line-height:10px;color:#858585">Subtotal</div>
<div class="t" style="right:185.3px;top:367px;font-size:7px;line-height:10px;color:#222;-webkit-text-stroke:0.14px">&euro;1800.00</div>
<div class="t" style="left:545.4px;top:377.6px;font-size:7px;line-height:10px;color:#858585;word-spacing:1.2px">VAT 19%</div>
<div class="t" style="right:185.3px;top:377.6px;font-size:7px;line-height:10px;color:#222;-webkit-text-stroke:0.14px">&euro;342.00</div>
<div class="r" style="left:540.3px;top:389.2px;width:119.3px;height:12.4px;background:#ededed"></div>
<div class="t" style="left:545.4px;top:391px;font-size:7px;line-height:10px;color:#000;font-weight:bold">Total</div>
<div class="t" style="right:185.3px;top:391px;font-size:7px;line-height:10px;color:#000;font-weight:bold">&euro;2142.00</div>
<div class="t" style="left:331.1px;top:418.9px;font-size:7px;line-height:10px;color:#111;-webkit-text-stroke:0.14px">Thank you for your business.</div>
<div class="t" style="left:331.1px;top:438.2px;font-size:5.5px;line-height:10px;color:#000;-webkit-text-stroke:0.2px">Created using <span style="color:#22c640">Paymoapp.com</span></div>
<div class="t" style="left:295.6px;top:530.3px;font-size:8.6px;line-height:12px;color:#3a3a3a;transform:scaleX(0.92);transform-origin:0 50%">Permalink for clients:</div>
</main>
<div class="r" style="left:0;top:0;width:840px;height:1px;background:#1bcfb4"></div>
<div class="r" style="left:0;top:0;width:1px;height:540px;background:#1bcfb4"></div>
<div class="r" style="left:1px;top:0;width:1px;height:540px;background:#1bcfb4;opacity:.3"></div>
<div class="r" style="left:839px;top:0;width:1px;height:540px;background:#1bcfb4"></div>
<div class="r" style="left:0;top:539px;width:840px;height:1px;background:#1bcfb4"></div>
<div class="r" style="left:0;top:538px;width:840px;height:1px;background:#1bcfb4;opacity:.25"></div>
</div>
</body>
</html>
